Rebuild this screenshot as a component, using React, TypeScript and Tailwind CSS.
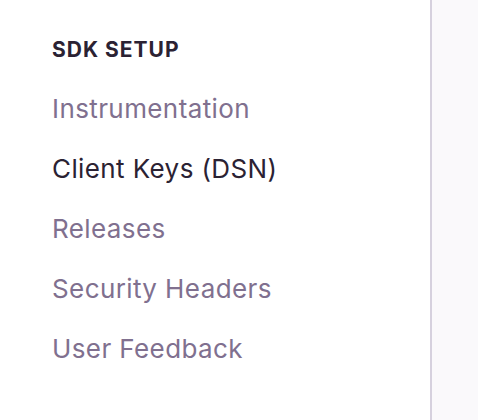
const items = [
  { label: 'Instrumentation', active: false },
  { label: 'Client Keys (DSN)', active: true },
  { label: 'Releases', active: false },
  { label: 'Security Headers', active: false },
  { label: 'User Feedback', active: false },
]

export default function App() {
  return (
    <div className="flex h-[420px] w-[478px] bg-[#faf9fb] font-['Inter',sans-serif]">
      {/* Sidebar */}
      <nav className="w-[432px] flex-shrink-0 bg-white border-r-2 border-[#d6d1de] pl-[52px] pt-[36px]">
        <h3 className="text-[21px] leading-[28px] font-bold uppercase tracking-[1px] text-[#2b2233]">SDK Setup</h3>
        <ul className="mt-[14px] flex flex-col">
          {items.map(({ label, active }) => (
            <li
              key={label}
              className={
                'h-[60px] flex items-center text-[26px] tracking-[0.4px] ' +
                (active ? 'text-[#2b2233]' : 'text-[#80708f]')
              }
            >
              {label}
            </li>
          ))}
        </ul>
      </nav>
      <div className="flex-1" />
    </div>
  )
}
